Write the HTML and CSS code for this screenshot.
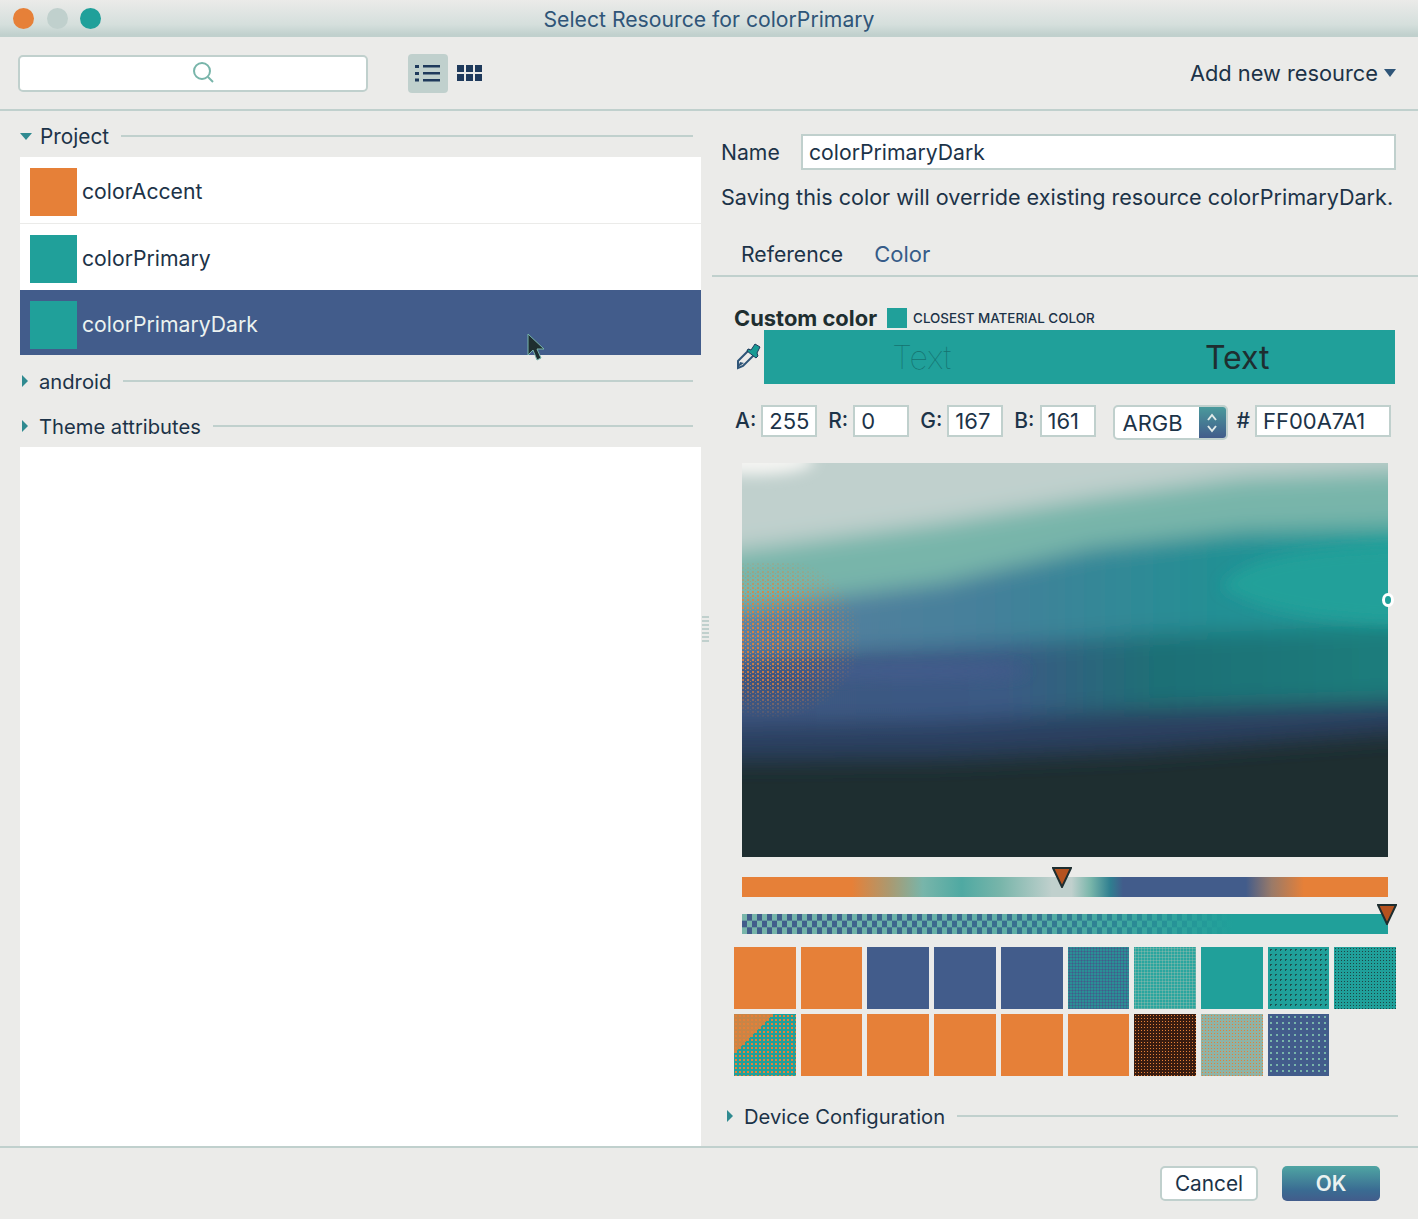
FILE: index.html
```html
<!DOCTYPE html>
<html lang="en">
  <head>
    <meta charset="UTF-8" />
    <meta name="viewport" content="width=device-width, initial-scale=1.0" />
    <title>Select Resource for colorPrimary</title>
    <link rel="stylesheet" href="styles.css">
  </head>
  <body>
    <div class="titlebar">
      <div class="lights">
        <span class="light light-close"></span>
        <span class="light light-min"></span>
        <span class="light light-max"></span>
      </div>
      <div class="title">Select Resource for colorPrimary</div>
    </div>

    <div class="toolbar">
      <div class="search">
        <svg width="24" height="24" viewBox="0 0 24 24" fill="none" stroke="#78b5aa" stroke-width="2">
          <circle cx="11" cy="10" r="8"></circle>
          <path d="M17 16l5 5"></path>
        </svg>
      </div>
      <div class="view-btn">
        <svg width="26" height="18" viewBox="0 0 26 18" fill="#1f3a5c">
          <rect x="0" y="1" width="4" height="3"></rect>
          <rect x="8" y="1" width="17" height="2.5"></rect>
          <rect x="0" y="8" width="4" height="3"></rect>
          <rect x="8" y="8" width="17" height="2.5"></rect>
          <rect x="0" y="14.5" width="4" height="3"></rect>
          <rect x="8" y="15" width="17" height="2.5"></rect>
        </svg>
      </div>
      <svg class="grid-icon" width="25" height="16" viewBox="0 0 25 16" fill="#1f3a5c">
        <rect x="0" y="0" width="7" height="7"></rect>
        <rect x="9" y="0" width="7" height="7"></rect>
        <rect x="18" y="0" width="7" height="7"></rect>
        <rect x="0" y="9" width="7" height="7"></rect>
        <rect x="9" y="9" width="7" height="7"></rect>
        <rect x="18" y="9" width="7" height="7"></rect>
      </svg>
      <div class="add-new">Add new resource<span class="caret"></span></div>
    </div>

    <div class="main">
      <div class="left">
        <div class="group group-open">
          <span class="arrow-down"></span>
          <span class="group-name">Project</span>
          <span class="group-line"></span>
        </div>
        <div class="res-list">
          <div class="res-row">
            <span class="res-swatch orange"></span>
            <span>colorAccent</span>
          </div>
          <div class="res-row res-row-second">
            <span class="res-swatch teal"></span>
            <span>colorPrimary</span>
          </div>
          <div class="res-row selected">
            <span class="res-swatch teal"></span>
            <span>colorPrimaryDark</span>
            <svg class="cursor" width="20" height="30" viewBox="0 0 20 30">
              <path d="M1 1v21l5-5 4 10 4-2-4-9h7z" fill="#1e2e30" stroke="#78b5aa" stroke-width="1"></path>
            </svg>
          </div>
        </div>
        <div class="group group-android">
          <span class="arrow-right"></span>
          <span class="group-name">android</span>
          <span class="group-line"></span>
        </div>
        <div class="group group-last">
          <span class="arrow-right"></span>
          <span class="group-name">Theme attributes</span>
          <span class="group-line"></span>
        </div>
        <div class="empty-list"></div>
      </div>

      <div class="splitter"><span class="grip"></span></div>

      <div class="right">
        <div class="name-row">
          <span class="name-label">Name</span>
          <div class="field name-field">colorPrimaryDark</div>
        </div>
        <div class="warning">Saving this color will override existing resource colorPrimaryDark.</div>
        <div class="tabs">
          <span class="tab">Reference</span>
          <span class="tab tab-active">Color</span>
        </div>

        <div class="custom-row">
          <span class="custom-label">Custom color</span>
          <span class="closest-swatch"></span>
          <span class="closest-label">Closest material color</span>
        </div>
        <div class="preview-row">
          <svg class="dropper" width="28" height="28" viewBox="0 0 28 28">
            <path d="M4 19L15 8l5 5L9 24l-5 2z" fill="#ebebe9" stroke="#2f5578" stroke-width="2"></path>
            <path d="M4 25l2-5 4 1z" fill="#2f5578"></path>
            <path d="M14 7l3 1 4-6 5 3-3 6 1 3-2 2-9-7z" fill="#179a94" stroke="#1f3a5c" stroke-width="1"></path>
          </svg>
          <div class="preview">
            <span class="preview-text thin">Text</span>
            <span class="preview-text">Text</span>
          </div>
        </div>

        <div class="fields">
          <span class="f-label">A:</span>
          <div class="field f-num">255</div>
          <span class="f-label f-gap">R:</span>
          <div class="field f-num">0</div>
          <span class="f-label f-gap">G:</span>
          <div class="field f-num">167</div>
          <span class="f-label f-gap">B:</span>
          <div class="field f-num">161</div>
          <div class="select">
            <span class="select-val">ARGB</span>
            <span class="stepper">
              <svg width="14" height="24" viewBox="0 0 14 24" fill="none" stroke="#dfeae8" stroke-width="2">
                <path d="M3 9l4-5 4 5"></path>
                <path d="M3 15l4 5 4-5"></path>
              </svg>
            </span>
          </div>
          <span class="f-label hash">#</span>
          <div class="field f-hex">FF00A7A1</div>
        </div>

        <div class="picker">
          <svg class="picker-svg" width="646" height="394" viewBox="0 0 646 394">
            <defs>
              <filter id="blur11" x="-20%" y="-20%" width="140%" height="140%"><feGaussianBlur stdDeviation="11"></feGaussianBlur></filter>
              <filter id="blur7" x="-30%" y="-60%" width="160%" height="220%"><feGaussianBlur stdDeviation="7"></feGaussianBlur></filter>
              <linearGradient id="midBand" x1="0" x2="1" y1="0" y2="0">
                <stop offset="0" stop-color="#3c5680"></stop>
                <stop offset="0.42" stop-color="#3b5a84"></stop>
                <stop offset="0.62" stop-color="#1f6f76"></stop>
                <stop offset="1" stop-color="#1a7f7c"></stop>
              </linearGradient>
              <linearGradient id="upBand" x1="0" x2="1" y1="0" y2="0">
                <stop offset="0" stop-color="#5f7fa0"></stop>
                <stop offset="0.4" stop-color="#44809a"></stop>
                <stop offset="0.7" stop-color="#248f94"></stop>
                <stop offset="1" stop-color="#20a09a"></stop>
              </linearGradient>
              <pattern id="orangeDots" width="5" height="4" patternUnits="userSpaceOnUse">
                <rect width="2" height="2" fill="#e68038"></rect>
                <rect x="3" y="2" width="1" height="1" fill="#e68038"></rect>
              </pattern>
              <radialGradient id="orangeFade">
                <stop offset="0" stop-color="#fff"></stop>
                <stop offset="0.55" stop-color="#ccc"></stop>
                <stop offset="1" stop-color="#000"></stop>
              </radialGradient>
              <mask id="orangeMask" maskUnits="userSpaceOnUse" x="0" y="90" width="140" height="180">
                <ellipse cx="30" cy="175" rx="90" ry="82" fill="url(#orangeFade)"></ellipse>
              </mask>
            </defs>
            <rect width="646" height="394" fill="#1e2e30"></rect>
            <g filter="url(#blur11)">
              <path d="M-40-40H686V268L400 288 200 296-40 298z" fill="#2c4060"></path>
              <path d="M-40-40H686V236L400 246 200 258-40 262z" fill="url(#midBand)"></path>
              <path d="M-40-40H686V160L400 172 200 185-40 195z" fill="url(#upBand)"></path>
              <path d="M-40-40H686V62L500 68 350 85 200 120-40 150z" fill="#78b5aa"></path>
              <path d="M-40-40H686V6L500 14 350 35 200 60-40 92z" fill="#c0d0cd"></path>
            </g>
            <ellipse cx="12" cy="-2" rx="60" ry="14" fill="#f4f4f2" filter="url(#blur7)"></ellipse>
            <path d="M480 124C500 95 560 84 700 82V160C600 160 520 150 480 124z" fill="#20a09a" filter="url(#blur7)"></path>
            <ellipse cx="165" cy="208" rx="120" ry="9" fill="#425c8b" filter="url(#blur7)"></ellipse>
            <rect x="0" y="100" width="120" height="160" fill="url(#orangeDots)" mask="url(#orangeMask)"></rect>
          </svg>
          <span class="picker-ring"></span>
        </div>

        <div class="slider hue">
          <svg class="thumb thumb-hue" width="20" height="21" viewBox="0 0 20 21">
            <path d="M1 1h18L10 20z" fill="#b5521f" stroke="#1e2e30" stroke-width="2"></path>
          </svg>
        </div>
        <div class="slider alpha">
          <svg class="thumb thumb-alpha" width="20" height="21" viewBox="0 0 20 21">
            <path d="M1 1h18L10 20z" fill="#b5521f" stroke="#1e2e30" stroke-width="2"></path>
          </svg>
        </div>

        <div class="palette">
          <span class="chip orange"></span>
          <span class="chip orange"></span>
          <span class="chip blue"></span>
          <span class="chip blue"></span>
          <span class="chip blue"></span>
          <span class="chip chip-tealblue"></span>
          <span class="chip chip-lightteal"></span>
          <span class="chip teal"></span>
          <span class="chip chip-tealdark"></span>
          <span class="chip chip-tealdarker"></span>
          <span class="chip chip-mix"></span>
          <span class="chip orange"></span>
          <span class="chip orange"></span>
          <span class="chip orange"></span>
          <span class="chip orange"></span>
          <span class="chip orange"></span>
          <span class="chip chip-brown"></span>
          <span class="chip chip-sand"></span>
          <span class="chip chip-bluedots"></span>
        </div>

        <div class="group device">
          <span class="arrow-right"></span>
          <span class="group-name">Device Configuration</span>
          <span class="group-line"></span>
        </div>
      </div>
    </div>

    <div class="footer">
      <button class="btn btn-cancel">Cancel</button>
      <button class="btn btn-ok">OK</button>
    </div>
  </body>
</html>
```

FILE: styles.css
```css
* {
  box-sizing: border-box;
}
body {
  margin: 0;
  height: 1219px;
  overflow: hidden;
  display: flex;
  flex-direction: column;
  background: #ebebe9;
  font-family: "Inter", "Liberation Sans", sans-serif;
  font-size: 21.2px;
  color: #1c3348;
}
.titlebar {
  display: flex;
  align-items: center;
  height: 37px;
  flex: none;
  padding: 1px 0 0 13px;
  background: linear-gradient(#ebebe9, #d5dfdc 70%, #c0d0cd);
  border-bottom: 2px solid #c0d0cd;
  position: relative;
}
.lights {
  display: flex;
  gap: 12.5px;
}
.light {
  width: 21px;
  height: 21px;
  border-radius: 50%;
}
.light-close {
  background: #e68038;
}
.light-min {
  background: #c0d0cd;
}
.light-max {
  background: #20a09a;
}
.title {
  position: absolute;
  left: 0;
  right: 0;
  margin-top: 1px;
  text-align: center;
  font-size: 21.2px;
  color: #2f5578;
}
.toolbar {
  display: flex;
  align-items: center;
  height: 74px;
  flex: none;
  padding: 0 22px 0 18px;
  border-bottom: 2px solid #c0d0cd;
}
.search {
  display: flex;
  align-items: center;
  justify-content: center;
  width: 350px;
  height: 37px;
  padding-left: 20px;
  background: #fff;
  border: 2px solid #c0d0cd;
  border-radius: 5px;
}
.view-btn {
  display: flex;
  align-items: center;
  justify-content: center;
  width: 40px;
  height: 39px;
  margin-left: 40px;
  background: #c0d0cd;
  border-radius: 4px;
}
.grid-icon {
  margin-left: 9px;
}
.add-new {
  margin-left: auto;
  display: flex;
  align-items: center;
  gap: 6px;
  font-size: 21.8px;
}
.caret {
  width: 0;
  height: 0;
  border-left: 6.5px solid transparent;
  border-right: 6.5px solid transparent;
  border-top: 8px solid #2f5578;
}
.main {
  display: flex;
  flex: 1;
  min-height: 0;
}
.left {
  display: flex;
  flex-direction: column;
  width: 701px;
  flex: none;
  padding-left: 20px;
}
.group {
  display: flex;
  align-items: center;
  flex: none;
  padding-right: 8px;
  font-size: 20.2px;
}
.group-open {
  height: 46px;
  padding-top: 4px;
  font-size: 20.8px;
}
.group-android {
  height: 49px;
  padding-top: 3px;
}
.group-last {
  height: 43px;
  padding-top: 1px;
}
.group-line {
  flex: 1;
  height: 2px;
  margin-left: 12px;
  background: #c0d0cd;
}
.arrow-down {
  width: 0;
  height: 0;
  margin-right: 8px;
  border-left: 6px solid transparent;
  border-right: 6px solid transparent;
  border-top: 7px solid #2f8a90;
}
.arrow-right {
  width: 0;
  height: 0;
  margin: 0 11px 0 2px;
  border-top: 6px solid transparent;
  border-bottom: 6px solid transparent;
  border-left: 6px solid #2f8a90;
}
.res-list {
  flex: none;
  background: #fff;
}
.res-row {
  display: flex;
  align-items: center;
  gap: 5px;
  height: 67px;
  padding: 2px 0 0 10px;
  border-bottom: 1px solid #ebebe9;
  position: relative;
}
.res-row-second {
  height: 66px;
  border-bottom: 0;
}
.res-row.selected {
  height: 65px;
  padding-top: 3px;
  background: #425c8b;
  color: #ebf2f0;
  border-bottom: 0;
}
.res-swatch {
  width: 47px;
  height: 48px;
  margin-top: 2px;
}
.cursor {
  position: absolute;
  left: 507px;
  top: 43px;
}
.empty-list {
  flex: 1;
  background: #fff;
}
.orange {
  background: #e68038;
}
.teal {
  background: #20a09a;
}
.blue {
  background: #425c8b;
}
.splitter {
  display: flex;
  align-items: center;
  width: 11px;
  flex: none;
  padding-left: 1px;
}
.grip {
  width: 7px;
  height: 26px;
  background: repeating-linear-gradient(#c0d0cd 0 2px, transparent 2px 4px);
}
.right {
  flex: 1;
  min-width: 0;
}
.name-row {
  display: flex;
  align-items: center;
  height: 36px;
  margin-top: 23px;
  padding-left: 9px;
}
.name-label {
  width: 80px;
}
.field {
  display: flex;
  align-items: center;
  background: #fff;
  border: 2px solid #c0d0cd;
}
.name-field {
  width: 595px;
  height: 36px;
  padding-left: 6px;
}
.warning {
  margin-top: 13px;
  padding-left: 9px;
  font-size: 21.6px;
  line-height: 28px;
  white-space: nowrap;
}
.tabs {
  display: flex;
  gap: 31px;
  height: 46px;
  margin-top: 20px;
  padding-left: 29px;
  line-height: 46px;
  border-bottom: 2px solid #c0d0cd;
}
.tab-active {
  color: #365b88;
  font-size: 22px;
}
.custom-row {
  display: flex;
  align-items: center;
  height: 25px;
  margin-top: 28px;
  padding-left: 22px;
}
.custom-label {
  font-size: 21.9px;
  font-weight: 700;
  color: #1e2e30;
}
.closest-swatch {
  width: 20px;
  height: 20px;
  margin-left: 10px;
  background: #20a09a;
}
.closest-label {
  margin-left: 6px;
  font-size: 13.4px;
  font-weight: 500;
  text-transform: uppercase;
}
.preview-row {
  display: flex;
  height: 54px;
  padding-left: 22px;
}
.dropper {
  flex: none;
  margin: 12px 2px 0 0;
}
.preview {
  display: grid;
  grid-template-columns: 1fr 1fr;
  align-items: center;
  justify-items: center;
  width: 631px;
  background: #20a09a;
}
.preview-text {
  font-size: 32px;
  color: #1e2e30;
}
.preview-text.thin {
  font-weight: 100;
  color: #157370;
}
.fields {
  display: flex;
  align-items: flex-start;
  height: 32px;
  margin-top: 21px;
  padding-left: 23px;
  font-size: 22px;
}
.f-label {
  font-size: 21px;
  line-height: 32px;
  font-weight: 500;
}
.f-gap {
  margin-left: 11px;
}
.f-num {
  width: 56px;
  height: 32px;
  margin-left: 5px;
  padding-left: 6px;
}
.select {
  display: flex;
  width: 115px;
  height: 35px;
  margin-left: 17px;
  background: #fff;
  border: 2px solid #c0d0cd;
  border-radius: 5px;
  overflow: hidden;
}
.select-val {
  flex: 1;
  padding-left: 8px;
  line-height: 33px;
}
.stepper {
  display: flex;
  align-items: center;
  justify-content: center;
  width: 27px;
  background: linear-gradient(#4a9a9c, #425c8b);
}
.hash {
  margin-left: 9px;
}
.f-hex {
  width: 136px;
  height: 32px;
  margin-left: 5px;
  padding-left: 6px;
}
.picker {
  position: relative;
  width: 646px;
  height: 394px;
  margin: 26px 0 0 30px;
}
.picker-svg {
  display: block;
}
.picker-ring {
  position: absolute;
  right: -6px;
  top: 130px;
  width: 12px;
  height: 14px;
  background: #20a09a;
  border: 3px solid #fff;
  border-radius: 50%;
}
.slider {
  position: relative;
  width: 646px;
  height: 20px;
  margin-left: 30px;
}
.hue {
  margin-top: 20px;
  background: linear-gradient(to right, #e68038 17%, #a99a72 23%, #78b5aa 28%, #4fa9a2 34%, #78b5aa 40%, #c0d0cd 48%, #c0d0cd 51%, #78b5aa 54%, #2f7f90 57%, #425c8b 59%, #425c8b 78%, #9a7a68 82%, #e68038 87%);
}
.alpha {
  margin-top: 17px;
  background:
    linear-gradient(to right, rgba(32, 160, 154, 0) 0%, rgba(32, 160, 154, 0.25) 40%, #20a09a 76%),
    repeating-conic-gradient(#425c8b 0 25%, #78b5aa 0 50%) 0 0 / 10px 13.33px;
}
.thumb {
  position: absolute;
}
.thumb-hue {
  left: 310px;
  top: -10px;
}
.thumb-alpha {
  right: -9px;
  top: -10px;
}
.palette {
  display: grid;
  grid-template-columns: repeat(10, 1fr);
  grid-auto-rows: 62px;
  gap: 5px;
  width: 662px;
  margin: 13px 0 0 22px;
}
.chip-tealblue {
  background: radial-gradient(#425c8b 45%, transparent 50%) 0 0 / 3px 3px, #2a8f96;
}
.chip-lightteal {
  background: radial-gradient(#78b5aa 45%, transparent 50%) 0 0 / 3px 3px, #2aa69f;
}
.chip-tealdark {
  background: radial-gradient(rgba(30, 46, 48, 0.7) 1px, transparent 1px) 0 0 / 5px 5px, #20a09a;
}
.chip-tealdarker {
  background: radial-gradient(rgba(30, 46, 48, 0.8) 1px, transparent 1px) 0 0 / 3px 3px, #20a09a;
}
.chip-mix {
  background:
    linear-gradient(135deg, rgba(230, 128, 56, 0.85) 32%, transparent 32% 100%),
    radial-gradient(#e68038 40%, transparent 45%) 0 0 / 4px 4px,
    #20a09a;
}
.chip-brown {
  background: radial-gradient(#e68038 42%, transparent 47%) 0 0 / 3px 3px, #3a1c10;
}
.chip-sand {
  background: radial-gradient(#e68038 40%, transparent 45%) 0 0 / 3px 3px, #8fb3a6;
}
.chip-bluedots {
  background: radial-gradient(#78b5aa 1px, transparent 1px) 0 0 / 6px 6px, #425c8b;
}
.device {
  height: 48px;
  margin-top: 16px;
  padding: 0 20px 0 13px;
}
.footer {
  display: flex;
  justify-content: flex-end;
  align-items: flex-start;
  gap: 24px;
  height: 73px;
  flex: none;
  padding: 18px 38px 0 0;
  border-top: 2px solid #c0d0cd;
}
.btn {
  width: 98px;
  height: 35px;
  padding: 0;
  font-family: inherit;
  font-size: 20.8px;
  border-radius: 5px;
}
.btn-cancel {
  background: #fff;
  color: #1c3348;
  border: 2px solid #c0d0cd;
}
.btn-ok {
  background: linear-gradient(#4fa5a3, #3a6b92 70%, #425c8b);
  color: #ebf2f0;
  border: 0;
  font-weight: 600;
}
```
